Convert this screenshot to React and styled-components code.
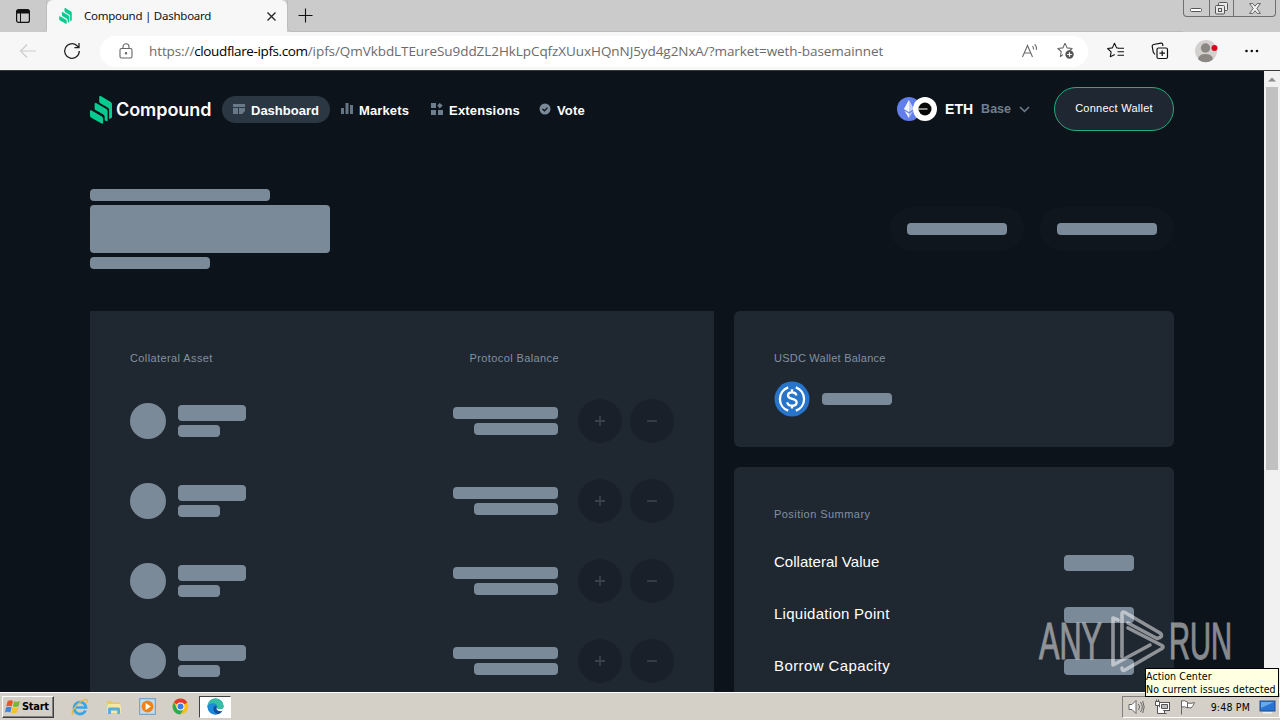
import React from 'react';
import styled, { createGlobalStyle } from 'styled-components';

const GlobalStyle = createGlobalStyle`
  * {
    box-sizing: border-box;
  }

  body {
    margin: 0;
    background: #0d131a;
    overflow: hidden;
  }
`;

const Screen = styled.div`
  position: relative;
  display: flex;
  flex-direction: column;
  width: 1280px;
  height: 720px;
  overflow: hidden;
  font-family: 'Liberation Sans', Arial, sans-serif;
`;

const TabStrip = styled.div`
  display: flex;
  height: 32px;
  background: #cbcbcb;
  align-items: flex-start;
`;

const TabActions = styled.div`
  display: flex;
  width: 47px;
  height: 32px;
  align-items: center;
  justify-content: center;
  border-right: 1px solid #bcbcbc;
  border-radius: 0 0 5px 0;
`;

const Tab = styled.div`
  display: flex;
  width: 240px;
  height: 32px;
  padding: 0 10px 0 11px;
  align-items: center;
  border-radius: 6px 6px 0 0;
  background: #f7f7f7;
`;

const TabTitle = styled.div`
  flex: 1;
  margin: -2px 0 0 11px;
  font-family: 'Noto Sans', 'Open Sans', sans-serif;
  font-size: 11.5px;
  letter-spacing: -0.25px;
  white-space: nowrap;
  color: #111;
`;

const NewTab = styled.div`
  display: flex;
  flex: 1;
  height: 32px;
  padding-left: 10px;
  align-items: center;
  border-left: 1px solid #bcbcbc;
  border-bottom: 1px solid #bcbcbc;
  border-radius: 0 0 0 5px;
`;

const WindowButtons = styled.div`
  display: flex;
  width: 93px;
  height: 17px;
  margin-right: 4px;
  border: 1px solid #6f6f6f;
  border-top: none;
  border-radius: 0 0 4px 4px;
`;

const WindowButton = styled.div`
  display: flex;
  width: ${props => props.$width}px;
  align-items: center;
  justify-content: center;

  & + & {
    border-left: 1px solid #6f6f6f;
  }
`;

const Toolbar = styled.div`
  display: flex;
  height: 39px;
  padding: 0 18px;
  align-items: center;
  background: #f7f7f7;
  border-bottom: 1px solid #38383e;
`;

const NavIcon = styled.div`
  display: flex;
  width: 20px;
  margin-right: ${props => props.$gap}px;
  justify-content: center;
`;

const AddressBar = styled.div`
  display: flex;
  width: 988px;
  height: 31px;
  padding: 0 13px 0 18px;
  align-items: center;
  border-radius: 16px;
  background: #fff;
`;

const Url = styled.div`
  flex: 1;
  margin-left: 15px;
  font-family: 'Open Sans', 'Noto Sans', sans-serif;
  font-size: 13.5px;
  white-space: nowrap;
  color: #6b6b6b;
`;

const UrlPart = styled.span`
  letter-spacing: ${props => props.$spacing}px;
  color: ${props => (props.$host ? '#000' : 'inherit')};
`;

const BarIcons = styled.div`
  display: flex;
  gap: 18px;
  align-items: center;
`;

const ToolIcons = styled.div`
  display: flex;
  flex: 1;
  margin-left: 19px;
  justify-content: space-between;
  align-items: center;
`;

const Viewport = styled.div`
  display: flex;
  height: 621px;
  overflow: hidden;
`;

const Page = styled.div`
  width: 1264px;
  padding: 16px 90px 0;
  background: #0d131a;
`;

const Scrollbar = styled.div`
  display: flex;
  flex-direction: column;
  width: 16px;
  padding: 5px 2px 0;
  align-items: center;
  background: #f1f1f1;
`;

const Thumb = styled.div`
  width: 12px;
  height: 383px;
  margin-top: 5px;
  background: #c1c1c1;
`;

const Header = styled.header`
  display: flex;
  height: 44px;
  align-items: center;
`;

const Brand = styled.div`
  display: flex;
  width: 132px;
  padding-top: 1px;
  align-items: center;
  gap: 4px;
  font-family: Inter, 'Liberation Sans', sans-serif;
  font-size: 18px;
  font-weight: 600;
  letter-spacing: -0.05px;
  color: #fff;
`;

const Nav = styled.nav`
  display: flex;
  flex: 1;
`;

const NavLink = styled.a`
  display: flex;
  height: 27px;
  padding: 2px 11px 0 ${props => props.$inset}px;
  gap: 6px;
  align-items: center;
  border-radius: 14px;
  background: ${props => (props.$active ? '#2b3844' : 'transparent')};
  font-size: 13px;
  font-weight: 700;
  letter-spacing: ${props => (props.$active ? 0 : 0.15)}px;
  color: #fff;
`;

const NavGlyph = styled.span`
  display: flex;
  margin-top: -3px;
`;

const Market = styled.div`
  display: flex;
  align-items: center;
  margin-right: 24px;
  font-weight: 700;
  font-size: 14px;
  color: #fff;
`;

const Network = styled.span`
  margin: 0 8px;
  font-size: 12.5px;
  color: #6f7f8e;
`;

const Ticker = styled.span`
  margin-left: 7px;
`;

const ConnectButton = styled.button`
  width: 120px;
  height: 44px;
  padding: 0 0 2px;
  border: 1px solid #1fae7c;
  border-radius: 22px;
  background: #1f2832;
  color: #fff;
  font-family: inherit;
  font-size: 11px;
  letter-spacing: 0.25px;
`;

const Hero = styled.section`
  display: flex;
  margin-top: 58px;
  justify-content: space-between;
  align-items: center;
`;

const Stack = styled.div`
  display: flex;
  flex-direction: column;
  gap: 4px;
  align-items: ${props => (props.$end ? 'flex-end' : 'flex-start')};
`;

const Bone = styled.div`
  width: ${props => props.$w}px;
  height: ${props => props.$h || 12}px;
  border-radius: 4px;
  background: #7b8a98;
`;

const HeroActions = styled.div`
  display: flex;
  gap: 16px;
`;

const HeroAction = styled.div`
  display: flex;
  width: 134px;
  height: 44px;
  align-items: center;
  justify-content: center;
  border-radius: 22px;
  background: #10161e;
`;

const Columns = styled.main`
  display: flex;
  margin-top: 42px;
  gap: 20px;
`;

const Assets = styled.section`
  width: 624px;
  height: 460px;
  padding: 40px;
  background: #1f2731;
`;

const AssetsHead = styled.div`
  display: flex;
  height: 14px;
  padding-right: 115px;
  justify-content: space-between;
`;

const Caption = styled.div`
  height: 14px;
  font-size: 11px;
  line-height: 14px;
  letter-spacing: ${props => props.$spacing}px;
  white-space: nowrap;
  color: #8291a0;
`;

const AssetRow = styled.div`
  display: flex;
  height: 44px;
  margin-top: 36px;
  align-items: center;

  ${AssetsHead} + & {
    margin-top: 34px;
  }
`;

const Avatar = styled.div`
  width: 36px;
  height: 36px;
  margin-right: 12px;
  border-radius: 50%;
  background: #7b8a98;
`;

const Balance = styled.div`
  flex: 1;
  margin-right: 20px;
`;

const RoundButton = styled.div`
  display: flex;
  width: 44px;
  height: 44px;
  align-items: center;
  justify-content: center;
  border-radius: 50%;
  background: #19202a;

  & + & {
    margin-left: 8px;
  }
`;

const Side = styled.aside`
  display: flex;
  flex-direction: column;
  width: 440px;
  gap: 20px;
`;

const Card = styled.section`
  height: ${props => props.$h}px;
  padding: 40px;
  border-radius: 6px;
  background: #1f2731;
`;

const WalletRow = styled.div`
  display: flex;
  margin-top: 16px;
  gap: 12px;
  align-items: center;
`;

const SummaryRow = styled.div`
  display: flex;
  height: 20px;
  margin-top: 32px;
  align-items: center;
  justify-content: space-between;
`;

const SummaryLabel = styled.span`
  padding-bottom: 4px;
  font-size: 15px;
  letter-spacing: ${props => props.$spacing}px;
  color: #fff;
`;

const Taskbar = styled.footer`
  display: flex;
  height: 28px;
  padding: 0 0 0 2px;
  align-items: center;
  border-top: 1px solid #fff;
  background: #d4d0c8;
  font-family: 'DejaVu Sans Condensed', 'DejaVu Sans', sans-serif;
  font-size: 10.5px;
  color: #000;
`;

const StartButton = styled.div`
  display: flex;
  width: 52px;
  height: 22px;
  margin-right: 16px;
  padding-left: 2px;
  align-items: center;
  gap: 1px;
  border: 1px solid;
  border-color: #fff #404040 #404040 #fff;
  box-shadow: inset -1px -1px #808080;
  font-weight: 700;
  font-size: 11px;
  letter-spacing: -0.3px;
`;

const Launch = styled.div`
  display: flex;
  width: 20px;
  margin-right: 13.6px;
  justify-content: center;
`;

const OpenTask = styled.div`
  display: flex;
  width: 32px;
  height: 22px;
  margin-left: -5px;
  align-items: center;
  justify-content: center;
  border: 1px solid;
  border-color: #404040 #fff #fff #404040;
  background: #fff;
`;

const Tray = styled.div`
  display: flex;
  width: 158px;
  height: 22px;
  margin-left: auto;
  padding: 0 3px 0 5px;
  align-items: center;
  justify-content: space-between;
  border: 1px solid;
  border-color: #808080 #fff #fff #808080;
`;

const Clock = styled.span`
  margin-left: 6px;
  letter-spacing: 0.2px;
`;

const Tooltip = styled.div`
  position: absolute;
  left: 1145px;
  top: 668px;
  width: 134px;
  height: 29px;
  padding: 1px 0;
  border: 1px solid #000;
  background: #ffffe1;
  font-family: 'DejaVu Sans Condensed', 'DejaVu Sans', sans-serif;
  font-size: 10.5px;
  line-height: 13px;
  letter-spacing: 0.1px;
  white-space: nowrap;
  color: #000;
`;

const Watermark = styled.svg`
  position: absolute;
  left: 1036px;
  top: 606px;
  opacity: 0.5;
`;

const CompoundMark = ({ width, height }) => (
  <svg width={width} height={height} viewBox="0 0 22 28">
    <path fill="#07cb91" d="M0 15.2c0-.8.8-1.2 1.500-.8l10.400 6c.8.5 1.200 1.200 1.200 2v4.300c0 .9-.8 1.300-1.500.9L1.400 21.700C.5 21.200 0 20.400 0 19.500z" />
    <path fill="#07cb91" d="M4.600 7.900c0-.8.8-1.200 1.500-.8l10.200 6c.8.5 1.300 1.400 1.300 2.300v9.300c0 .5-.4.8-.9.6l-2-1v-3.200c0-1-.5-2-1.400-2.500l-7.300-4.300c-.9-.5-1.400-1.400-1.400-2.400z" />
    <path fill="#07cb91" d="M9.200.9c0-.8.8-1.200 1.500-.8l10 5.900c.8.5 1.300 1.300 1.300 2.300v12.600c0 .5-.2.9-.7 1.100l-2.200 1v-8.900c0-1-.5-2-1.400-2.500l-7.100-4.200c-.9-.5-1.400-1.400-1.400-2.400z" />
  </svg>
);

const Star = ({ color, children }) => (
  <svg width="18" height="18" viewBox="0 0 18 18" fill="none" stroke={color} strokeWidth="1.1" strokeLinejoin="round">
    {children}
  </svg>
);

const navItems = [
  {
    label: 'Dashboard',
    active: true,
    inset: 11,
    icon: (
      <svg width="12" height="10" viewBox="0 0 12 10" fill="#7b8a98">
        <path d="M0 0h12v3H0zM0 4h5v6H0zM6 4h6v3L9 10H6z" opacity=".8" />
      </svg>
    ),
  },
  {
    label: 'Markets',
    inset: 11,
    icon: (
      <svg width="12" height="12" viewBox="0 0 12 12" fill="#667584">
        <path d="M0 5h3v6H0zM4.5 0h3v11h-3zM9 2h3v9H9z" />
      </svg>
    ),
  },
  {
    label: 'Extensions',
    inset: 11,
    icon: (
      <svg width="12" height="12" viewBox="0 0 12 12" fill="#6f7e8c">
        <path d="M0 0h5v5H0zM0 7h5v5H0zM7 7h5v5H7zM8.700 0l3 2.600-3 2.800-2.500-2.800z" />
      </svg>
    ),
  },
  {
    label: 'Vote',
    inset: 8,
    icon: (
      <svg width="12" height="12" viewBox="0 0 12 12" fill="none">
        <circle cx="6" cy="6" r="5.500" fill="#7b8a98" />
        <path d="M3.500 6l2 1.800 3-3.200" stroke="#0d131a" strokeWidth="1.300" />
      </svg>
    ),
  },
];

const summary = [
  { label: 'Collateral Value', spacing: 0.03 },
  { label: 'Liquidation Point', spacing: 0.28 },
  { label: 'Borrow Capacity', spacing: 0.4 },
];

const Browser = () => (
  <>
    <TabStrip>
      <TabActions>
        <svg width="14" height="14" viewBox="0 0 14 14">
          <rect x=".6" y=".6" width="12.800" height="12.800" rx="2" fill="none" stroke="#111" strokeWidth="1.200" />
          <path d="M1 1h12v3.500H1z" fill="#111" />
          <path d="M4.500 4v9.500" stroke="#111" />
        </svg>
      </TabActions>
      <Tab>
        <CompoundMark width={15} height={16} />
        <TabTitle>Compound | Dashboard</TabTitle>
        <svg width="11" height="11" viewBox="0 0 11 11" stroke="#222" strokeWidth="1.300">
          <path d="M1.500 1.500l8 8M9.500 1.500l-8 8" />
        </svg>
      </Tab>
      <NewTab>
        <svg width="15" height="15" viewBox="0 0 15 15" stroke="#111" strokeWidth="1.100">
          <path d="M.5 7.500h14M7.500.5v14" />
        </svg>
      </NewTab>
      <WindowButtons>
        <WindowButton $width={25}>
          <svg width="12" height="12" viewBox="0 0 12 12" fill="#fff" stroke="#555">
            <rect x=".5" y="6.500" width="11" height="3" rx="1" />
          </svg>
        </WindowButton>
        <WindowButton $width={25}>
          <svg width="13" height="13" viewBox="0 0 13 13" fill="#e8e8e8" stroke="#555">
            <rect x="3.500" y=".5" width="9" height="8" rx="1" />
            <rect x=".5" y="3.500" width="9" height="8.500" rx="1" />
            <rect x="3.500" y="6.500" width="3" height="3" />
          </svg>
        </WindowButton>
        <WindowButton $width={42}>
          <svg width="12" height="11" viewBox="0 0 12 11" fill="#f2f2f2" stroke="#555" strokeWidth=".9">
            <path d="M.6.6h3.200L6 3.200 8.200.6h3.200L7.800 5.500l3.600 4.900H8.200L6 7.800l-2.200 2.600H.6l3.600-4.900z" />
          </svg>
        </WindowButton>
      </WindowButtons>
    </TabStrip>
    <Toolbar>
      <NavIcon $gap={24}>
        <svg width="18" height="16" viewBox="0 0 18 16" fill="none" stroke="#ccc" strokeWidth="1.200">
          <path d="M17 8H2M8 1.500L1.500 8 8 14.500" />
        </svg>
      </NavIcon>
      <NavIcon $gap={18}>
        <svg width="18" height="18" viewBox="0 0 18 18" fill="none" stroke="#222" strokeWidth="1.300">
          <path d="M16.300 9A7.300 7.300 0 1 1 14 3.700l1.600 1.600M16 1v4.600h-4.600" />
        </svg>
      </NavIcon>
      <AddressBar>
        <svg width="16" height="16" viewBox="0 0 16 16" fill="none" stroke="#666" strokeWidth="1.100">
          <rect x="2" y="5.500" width="12" height="9.500" rx="1.500" />
          <path d="M5 5.500V3.700a3 3 0 0 1 6 0v1.800" />
          <circle cx="8" cy="10.300" r=".7" fill="#666" />
        </svg>
        <Url>
          <UrlPart $spacing={-0.1}>https://</UrlPart>
          <UrlPart $spacing={-0.38} $host>cloudflare-ipfs.com</UrlPart>
          <UrlPart $spacing={-0.07}>/ipfs/QmVkbdLTEureSu9ddZL2HkLpCqfzXUuxHQnNJ5yd4g2NxA/?market=weth-basemainnet</UrlPart>
        </Url>
        <BarIcons>
          <svg width="18" height="18" viewBox="0 0 18 18" fill="none" stroke="#6b6b6b" strokeWidth="1.100">
            <path d="M1.500 15L6.500 3.500 11.500 15M3.200 11h6.600M11.500 4.200a4 4 0 0 1 1 3.300M13.800 2.200a7 7 0 0 1 1.600 5.600" />
          </svg>
          <Star color="#666">
            <path d="M8 1.200l2.100 4.700 5 .6-3.800 3.500M6 12.600l-2.600 1.900.8-5L.8 6.500l5-.6L8 1.200" />
            <circle cx="12.500" cy="12.500" r="4.200" fill="#555" stroke="none" />
            <path d="M12.500 10.200v4.600M10.200 12.500h4.600" stroke="#fff" />
          </Star>
        </BarIcons>
      </AddressBar>
      <ToolIcons>
        <Star color="#111">
          <path d="M11.500 6L9.600 5.900 7.500 1.200 5.400 5.900.6 6.500l3.500 3.300-.8 5 4.500-2.300M11 6.200h6M10.500 9.700H17M10.500 13.200H17" />
        </Star>
        <svg width="18" height="18" viewBox="0 0 18 18" fill="none" stroke="#111" strokeWidth="1.200">
          <rect x="6" y="6" width="10.500" height="10.500" rx="1.500" />
          <path d="M11.200 8.500v5.500M8.500 11.200H14M4 12.500L2.300 10.300 1.200 4.500Q1 3 2.500 2.500L10 1.200q1.500-.2 1.800 1.300V4" />
        </svg>
        <svg width="24" height="24" viewBox="0 0 24 24">
          <circle cx="12" cy="12" r="11" fill="#d3d1cf" />
          <circle cx="11.500" cy="9" r="4.700" fill="#8b8783" />
          <path d="M4 20q1-5 7.500-5t7.500 5q-3 3.200-7.500 3.200T4 20" fill="#8b8783" />
          <circle cx="20.500" cy="9" r="3" fill="#d9091c" />
        </svg>
        <svg width="18" height="18" viewBox="0 0 18 18" fill="#111">
          <circle cx="2.500" cy="9" r="1.300" />
          <circle cx="7.800" cy="9" r="1.300" />
          <circle cx="13" cy="9" r="1.300" />
        </svg>
      </ToolIcons>
    </Toolbar>
  </>
);

const Top = () => (
  <Header>
    <Brand>
      <CompoundMark width={22} height={28} />
      Compound
    </Brand>
    <Nav>
      {navItems.map(item => (
        <NavLink key={item.label} $active={item.active} $inset={item.inset}>
          <NavGlyph>{item.icon}</NavGlyph>
          {item.label}
        </NavLink>
      ))}
    </Nav>
    <Market>
      <svg width="41" height="24" viewBox="0 0 41 24">
        <circle cx="12" cy="12" r="12" fill="#627eea" />
        <path d="M12 3l5 9-5 3-5-3z" fill="#c4cff7" />
        <path d="M12 3v12l-5-3zM7.500 13.800L12 16.500v4.700z" fill="#f4f6fe" />
        <path d="M12 16.500l4.500-2.700L12 21.200z" fill="#a8b7f3" />
        <circle cx="28" cy="12" r="12" fill="#fff" />
        <circle cx="28" cy="12" r="6.500" fill="#080808" />
        <path d="M21 11.200h9.500v1.600H21z" fill="#aaa" />
      </svg>
      <Ticker>ETH</Ticker>
      <Network>Base</Network>
      <svg width="11" height="7" viewBox="0 0 11 7" fill="none" stroke="#6f7f8e" strokeWidth="1.500">
        <path d="M1 1l4.500 4.500L10 1" />
      </svg>
    </Market>
    <ConnectButton>Connect Wallet</ConnectButton>
  </Header>
);

const Asset = () => (
  <AssetRow>
    <Avatar />
    <Stack>
      <Bone $w={68} $h={16} />
      <Bone $w={42} />
    </Stack>
    <Balance>
      <Stack $end>
        <Bone $w={105} />
        <Bone $w={84} />
      </Stack>
    </Balance>
    <RoundButton>
      <svg width="10" height="10" viewBox="0 0 10 10" stroke="#36404b" strokeWidth="1.800">
        <path d="M0 5h10M5 0v10" />
      </svg>
    </RoundButton>
    <RoundButton>
      <svg width="10" height="10" viewBox="0 0 10 10" stroke="#36404b" strokeWidth="1.800">
        <path d="M0 5h10" />
      </svg>
    </RoundButton>
  </AssetRow>
);

const Dashboard = () => (
  <Page>
    <Top />
    <Hero>
      <Stack>
        <Bone $w={180} />
        <Bone $w={240} $h={48} />
        <Bone $w={120} />
      </Stack>
      <HeroActions>
        <HeroAction>
          <Bone $w={100} />
        </HeroAction>
        <HeroAction>
          <Bone $w={100} />
        </HeroAction>
      </HeroActions>
    </Hero>
    <Columns>
      <Assets>
        <AssetsHead>
          <Caption $spacing={0.4}>Collateral Asset</Caption>
          <Caption $spacing={0.4}>Protocol Balance</Caption>
        </AssetsHead>
        {[0, 1, 2, 3].map(row => (
          <Asset key={row} />
        ))}
      </Assets>
      <Side>
        <Card $h={136}>
          <Caption $spacing={0.23}>USDC Wallet Balance</Caption>
          <WalletRow>
            <svg width="36" height="36" viewBox="0 0 36 36" fill="none" stroke="#fff" strokeWidth="2.300">
              <circle cx="18" cy="18" r="17.500" fill="#2775ca" stroke="none" />
              <path d="M14.200 6.300a12.400 12.400 0 0 0 0 23.400M21.800 6.300a12.400 12.400 0 0 1 0 23.400" />
              <path d="M22.300 14.500c-.2-2-1.700-3.100-4.200-3.100-2.600 0-4.100 1.300-4.100 3.200 0 4.700 8.600 2 8.600 6.800 0 2-1.700 3.300-4.500 3.300-2.900 0-4.600-1.300-4.700-3.500M18 8.300v3M18 24.500v3" />
            </svg>
            <Bone $w={70} />
          </WalletRow>
        </Card>
        <Card $h={300}>
          <Caption $spacing={0.45}>Position Summary</Caption>
          {summary.map(item => (
            <SummaryRow key={item.label}>
              <SummaryLabel $spacing={item.spacing}>{item.label}</SummaryLabel>
              <Bone $w={70} $h={16} />
            </SummaryRow>
          ))}
        </Card>
      </Side>
    </Columns>
  </Page>
);

const Desktop = () => (
  <Taskbar>
    <StartButton>
      <svg width="16" height="16" viewBox="0 0 16 16">
        <path d="M2.500 2.500Q5 .5 8 2L6.800 7.200Q4 6 1.200 7.500z" fill="#e5562a" />
        <path d="M9 2.300q3 1.200 6-.3l-1.300 5.200q-3 1.300-5.800.3z" fill="#7db72f" />
        <path d="M1 8.500q3-1.300 5.600-.2L5.300 13.500Q2.500 12.200 0 13.500z" fill="#3d87d6" />
        <path d="M7.600 8.600q3 1 5.900-.2l-1.300 5.100q-3 1.500-6 .3z" fill="#f6c12c" />
      </svg>
      Start
    </StartButton>
    <Launch>
      <svg width="18" height="18" viewBox="0 0 18 18" fill="none">
        <path d="M14.500 12.500A6 6 0 1 1 15 9.500H5" stroke="#39a5e2" strokeWidth="2.700" />
        <path d="M3 16Q-.5 16 3 10.500 8 3.500 14 1.500q3.500-.5 1.500 3.500" stroke="#e9b83a" strokeWidth="1.300" />
      </svg>
    </Launch>
    <Launch>
      <svg width="18" height="18" viewBox="0 0 18 18">
        <path d="M2 3h5l1 1.500h7V15H2z" fill="#e8c66a" />
        <path d="M3 6h12l1 3v6H2V8z" fill="#f7e5a0" />
        <path d="M3 16v-5q0-1.500 1.500-1.500h9Q15 9.500 15 11v5h-2.800v-3.500H6V16z" fill="#59aed9" />
      </svg>
    </Launch>
    <Launch>
      <svg width="17" height="17" viewBox="0 0 17 17">
        <rect x=".7" y=".7" width="15.600" height="15.600" fill="#c4dced" stroke="#6299c9" />
        <circle cx="8.500" cy="8.500" r="5.900" fill="#f08317" />
        <path d="M6.600 5l5.200 3.500L6.600 12z" fill="#fff" />
      </svg>
    </Launch>
    <Launch>
      <svg width="17" height="17" viewBox="0 0 18 18">
        <circle cx="9" cy="9" r="8.300" fill="#fbc116" />
        <path d="M9 9L1.800 4.800A8.300 8.300 0 0 1 16.200 4.800z" fill="#e33b2e" />
        <path d="M1.800 4.800A8.300 8.300 0 0 0 9 17.300L12.600 11 9 9 5.400 11z" fill="#2da94f" />
        <circle cx="9" cy="9" r="4.200" fill="#fff" />
        <circle cx="9" cy="9" r="3.200" fill="#3b7ded" />
      </svg>
    </Launch>
    <OpenTask>
      <svg width="17" height="17" viewBox="0 0 18 18">
        <circle cx="9" cy="9" r="8.500" fill="#1370c6" />
        <path d="M.6 8A8.500 8.500 0 0 1 17.500 8q.4 4-4.500 4-3 0-2.500-2Q10.500 6 6.500 6 3 6 .6 8" fill="#36c0a3" />
        <path d="M.6 8Q3 5.500 6.500 5.500q3 0 4 2.500-4-.5-4 3.500 0 3.500 5 5.500Q5 19 1.500 12.500.5 10 .6 8" fill="#1c8bd8" />
        <path d="M10.500 8.500q-2 2.500.5 4.500 2.500 1.500 5.500.3-1.500 3-5 3.800-4.500-2-4.500-5.500t3.500-3.100" fill="#124f9e" />
        <path d="M10.500 10q0 2 2.500 2 3.500 0 4.500-2v3q-3 1.500-5.500.5T10.500 10" fill="#fff" />
      </svg>
    </OpenTask>
    <Tray>
      <svg width="17" height="16" viewBox="0 0 17 16" fill="#fff" stroke="#666">
        <path d="M1 5.500h3l4-4v13l-4-4H1z" />
        <path d="M10.500 5q2 3 0 6M12.500 3q3.500 5 0 10M14.700 2q3 6 0 12" fill="none" />
      </svg>
      <svg width="16" height="16" viewBox="0 0 16 16" fill="#fff" stroke="#555">
        <rect x="5.500" y="3.500" width="10" height="8" />
        <path d="M7.500 5.500h6v4h-6z" fill="#bbb" />
        <path d="M1.500 2.500h4v4h-4zM2.500.5v2M4.500.5v2M3.500 6.500v8h9M10.500 11.500v3" />
      </svg>
      <svg width="17" height="16" viewBox="0 0 17 16" fill="#fff" stroke="#666">
        <path d="M2.500 1.500v14M2.500 2q3-1 6 1v6q-3-2-6-1zM8.500 4q3 1 7-.5-1 3.500-3.500 5.500l-3.500-.5z" />
      </svg>
      <Clock>9:48 PM</Clock>
      <svg width="17" height="14" viewBox="0 0 17 14">
        <rect x="1" y="1" width="15" height="10" fill="#2873d3" stroke="#204d92" />
        <path d="M2 2h13L2 8z" fill="#65a9ee" />
        <path d="M4 12h9v1.500H4z" fill="#eee" />
      </svg>
    </Tray>
  </Taskbar>
);

const App = () => (
  <Screen>
    <GlobalStyle />
    <Browser />
    <Viewport>
      <Dashboard />
      <Scrollbar>
        <svg width="8" height="6" viewBox="0 0 8 6">
          <path d="M0 5.500l4-4 4 4z" fill="#8b8b8b" />
        </svg>
        <Thumb />
      </Scrollbar>
    </Viewport>
    <Desktop />
    <Watermark width="220" height="80" viewBox="0 0 220 80" fill="#fff">
      <g fontFamily="'Liberation Sans Narrow', 'Liberation Sans', sans-serif" fontSize="52" stroke="#fff" strokeWidth="1">
        <text x="3" y="53" textLength="63" lengthAdjust="spacingAndGlyphs">ANY</text>
        <text x="133" y="53" textLength="63" lengthAdjust="spacingAndGlyphs">RUN</text>
      </g>
      <g fill="none" stroke="#fff" strokeWidth="3.600" strokeLinecap="round" strokeLinejoin="round">
        <path d="M82 14l-5 -2v47l37 -20" />
        <path d="M86 51V8q0-3 3-1.500L124 27q3 2.500 0 4.500l-3 1L92 17" />
        <path d="M92 22l34 17.500q2 1.500 0 3L89 64q-3 1.500-3-2" />
      </g>
    </Watermark>
    <Tooltip>
      <div>Action Center</div>
      <div>No current issues detected</div>
    </Tooltip>
  </Screen>
);

export default App;
